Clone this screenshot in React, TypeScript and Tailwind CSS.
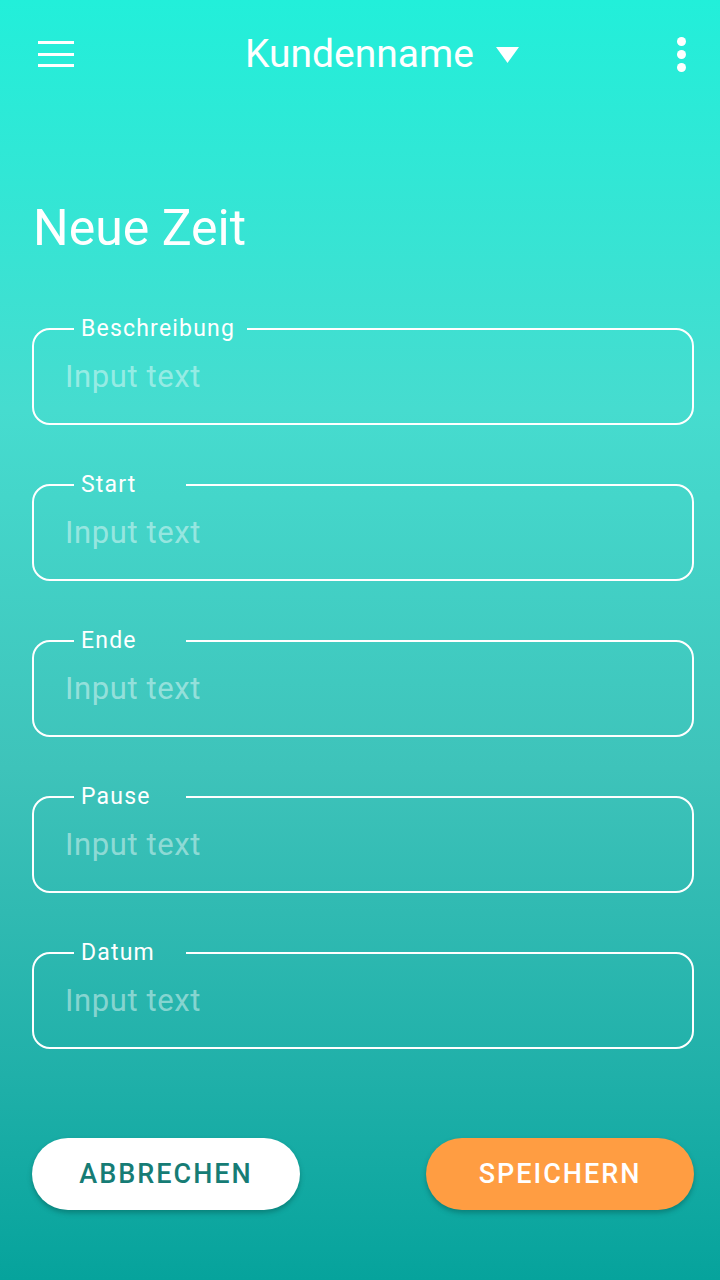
import React from 'react';

const fields = ['Beschreibung', 'Start', 'Ende', 'Pause', 'Datum'];

export default function App() {
  return (
    <div
      className="w-[720px] h-[1280px] flex flex-col bg-[linear-gradient(180deg,#22efda_0%,#46dccf_32%,#3ec3ba_60%,#20b0a9_84%,#06a39c_100%)] text-white overflow-hidden"
      style={{ fontFamily: 'Roboto, "Noto Sans", sans-serif' }}
    >
      {/* App bar */}
      <div className="h-[108px] flex items-center pl-[38px] pr-[34px]">
        <button className="w-[36px] h-[26px] flex flex-col justify-between">
          <span className="block h-[3px] w-full bg-white" />
          <span className="block h-[3px] w-full bg-white" />
          <span className="block h-[3px] w-full bg-white" />
        </button>
        <div className="flex-1 flex items-center justify-center gap-[22px] pl-[40px]">
          <span className="text-[39px] leading-none">Kundenname</span>
          <svg width="23" height="16" viewBox="0 0 23 16" className="mt-[2px]">
            <path d="M0 0h23L11.5 16z" fill="white" />
          </svg>
        </div>
        <div className="w-[36px] flex flex-col items-end gap-[4px]">
          <span className="block w-[9px] h-[9px] rounded-full bg-white" />
          <span className="block w-[9px] h-[9px] rounded-full bg-white" />
          <span className="block w-[9px] h-[9px] rounded-full bg-white" />
        </div>
      </div>

      <h1 className="mt-[95px] ml-[33px] text-[50px] leading-none font-normal">Neue Zeit</h1>

      {/* Form */}
      <div className="mt-[64px] pl-[32px] pr-[26px] flex flex-col gap-[48px]">
        {fields.map((label) => (
          <Field key={label} label={label} />
        ))}
      </div>

      {/* Actions */}
      <div className="mt-[89px] pl-[32px] pr-[26px] flex justify-between">
        <button className="w-[268px] h-[72px] rounded-full bg-white text-[#167c75] text-[27px] font-medium tracking-[2px] shadow-[0_3px_5px_rgba(0,60,55,0.35)]">
          ABBRECHEN
        </button>
        <button className="w-[268px] h-[72px] rounded-full bg-[#ff9d42] text-white text-[27px] font-medium tracking-[2px] shadow-[0_3px_5px_rgba(0,60,55,0.35)]">
          SPEICHERN
        </button>
      </div>
    </div>
  );
}

function Field({ label }: { label: string }) {
  return (
    <fieldset className="border-2 border-white rounded-[18px] px-0 m-0">
      <legend className="ml-[40px] pl-[7px] pr-[12px] min-w-[112px] text-[23px] leading-[24px] tracking-[1.2px]">
        {label}
      </legend>
      <input
        placeholder="Input text"
        className="block w-full h-[70px] mb-[12px] pl-[31px] pr-4 bg-transparent outline-none text-[31px] tracking-[0.6px] text-white placeholder:text-white/45"
      />
    </fieldset>
  );
}
